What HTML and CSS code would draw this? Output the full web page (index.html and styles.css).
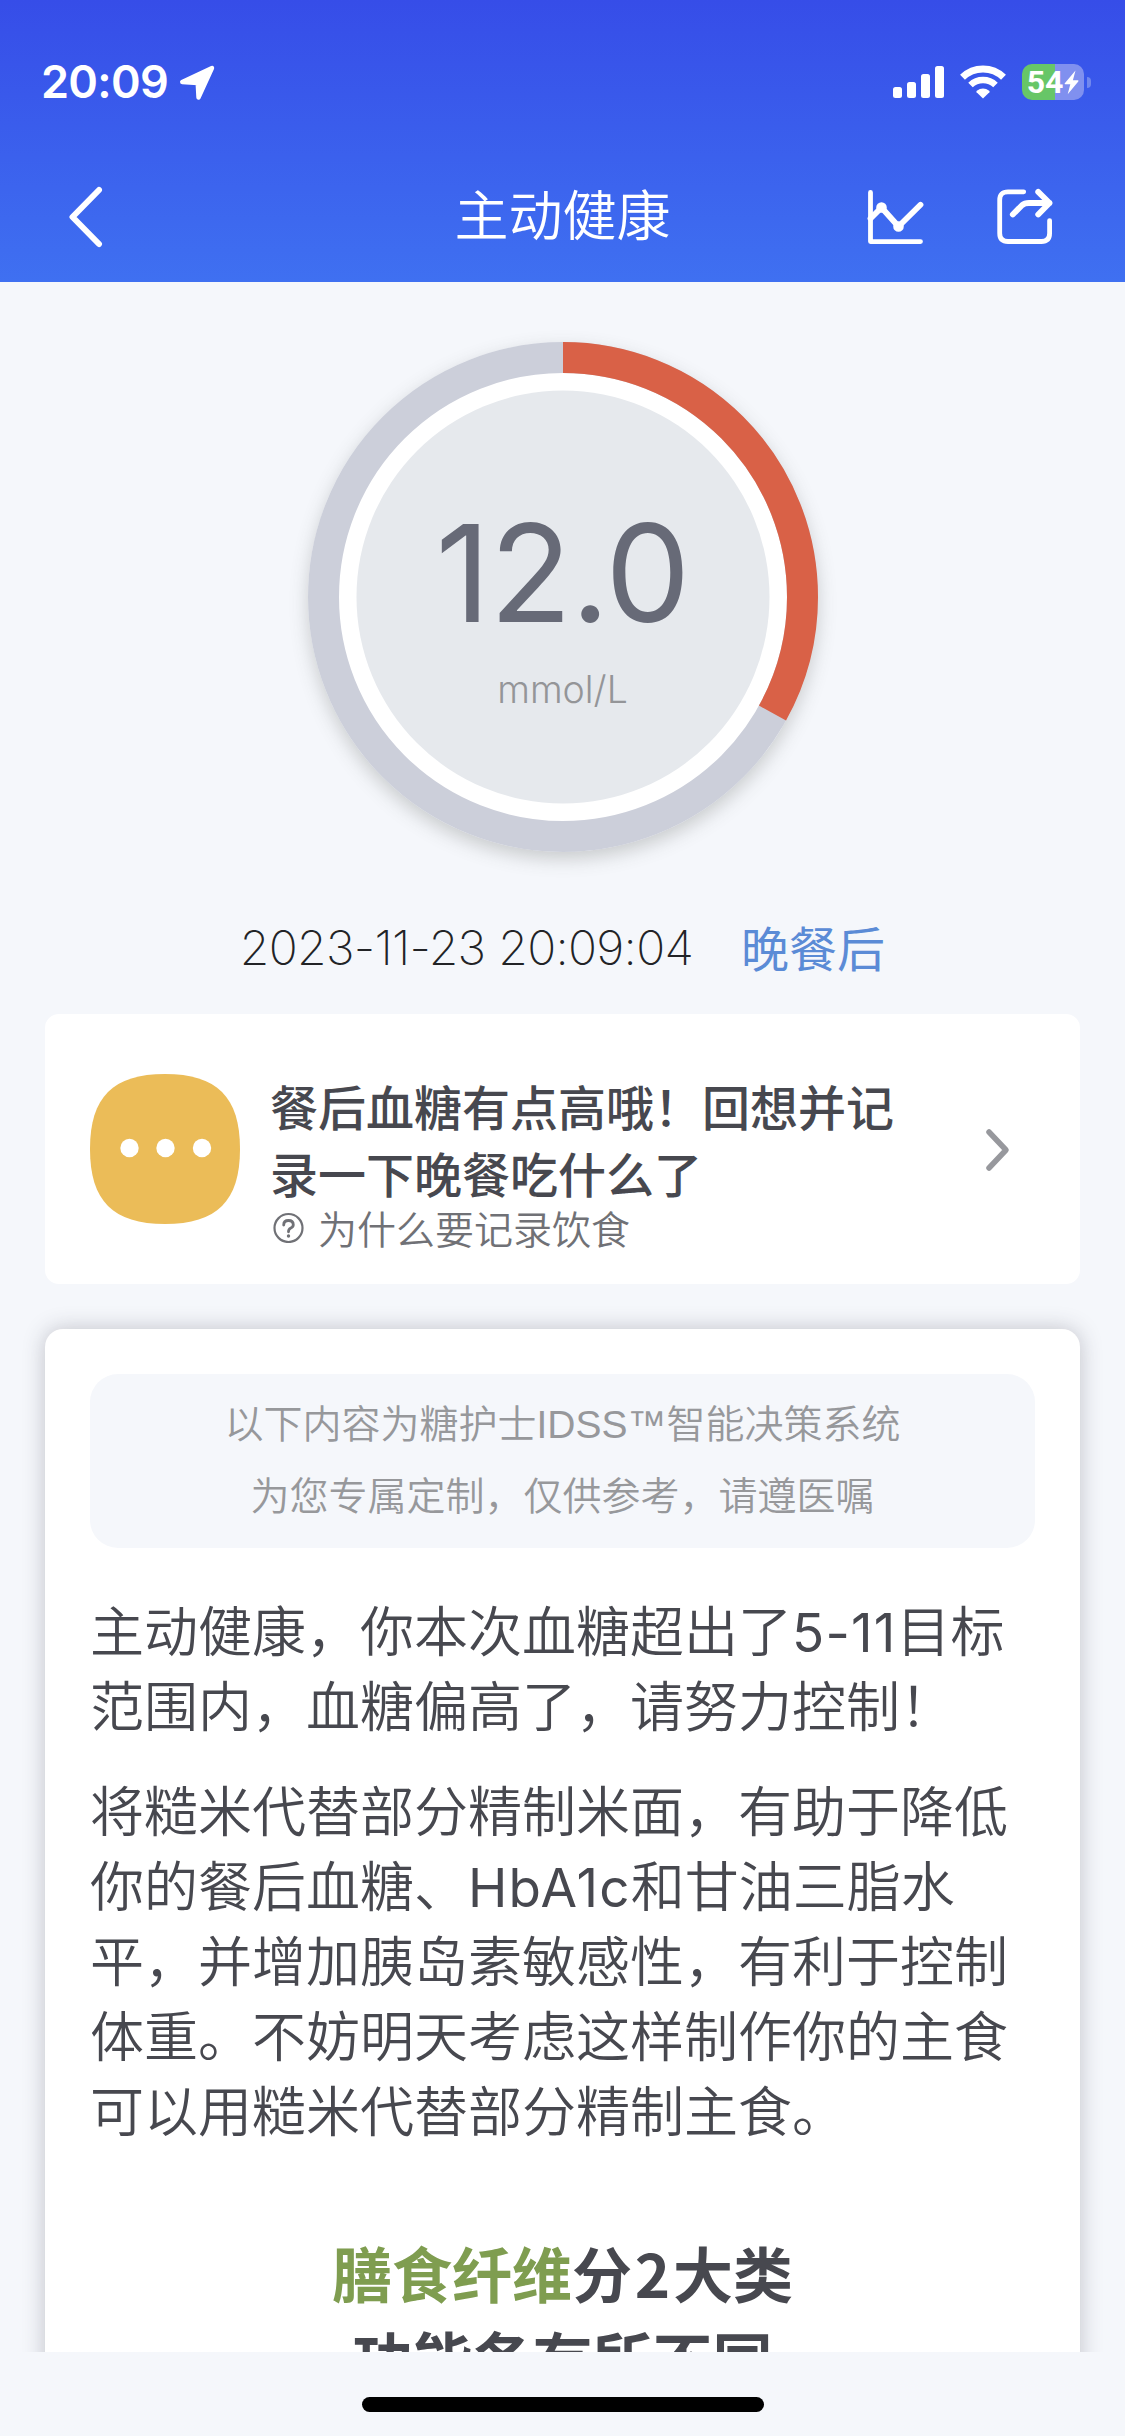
FILE: index.html
```html
<!DOCTYPE html>
<html lang="zh-CN">
<head>
<meta charset="utf-8">
<title>主动健康</title>
<link rel="stylesheet" href="styles.css">
</head>
<body>
<div class="screen">
  <header class="header">
    <div class="status">
      <span class="status-time">20:09</span>
      <svg class="status-location" width="37" height="36" viewBox="0 0 37 36"><path d="M4.200 17 34 3 20.500 32.500 19.700 18Z" fill="#fff" stroke="#fff" stroke-width="4.400" stroke-linejoin="round"/></svg>
      <div class="status-right">
        <svg width="52" height="34" viewBox="0 0 52 34" fill="#fff"><rect x="0" y="22" width="9" height="11" rx="2.500"/><rect x="14" y="17" width="9" height="16" rx="2.500"/><rect x="28" y="9" width="9" height="24" rx="2.500"/><rect x="42" y="1" width="9" height="32" rx="2.500"/></svg>
        <svg class="wifi" width="46" height="34" viewBox="0 0 46 34" fill="none" stroke="#fff"><path d="M2.500 12.200a29.500 29.500 0 0 1 41 0" stroke-width="7"/><path d="M10.500 20a18 18 0 0 1 25 0" stroke-width="6.500"/><path d="M23 33.500 16.600 27.200q-.6-.8.2-1.400 6.200-4.400 12.400 0 .8.6.2 1.400Z" fill="#fff" stroke="none"/></svg>
        <div class="battery"><span class="battery-level">54</span><svg width="15" height="25" viewBox="0 0 15 25"><path d="M11.500.5.8 13.200q-.6 1 .5 1.100h5L3.700 24.300 14.300 11.400q.6-1-.5-1.100H8.900Z" fill="#fff"/></svg></div>
        <span class="battery-cap"></span>
      </div>
    </div>
    <nav class="nav">
      <svg class="nav-back" width="36" height="66" viewBox="0 0 36 66"><path d="M32 6 5.500 33 32 60" fill="none" stroke="#fff" stroke-width="6" stroke-linecap="round" stroke-linejoin="round"/></svg>
      <h1 class="nav-title">主动健康</h1>
      <div class="nav-actions">
        <svg width="58" height="56" viewBox="0 0 58 56" fill="none" stroke="#fff" stroke-linecap="round" stroke-linejoin="round"><path d="M4.500 3.500V52.600H54.500" stroke-width="4.800"/><path d="M4.500 29.500 15.500 18.500 32.500 37.500 54.500 15.800" stroke-width="5.800"/><circle cx="15.500" cy="18.500" r="2.800" stroke-width="5"/><circle cx="32.500" cy="37.500" r="2.800" stroke-width="5"/></svg>
        <svg width="60" height="58" viewBox="0 0 60 58" fill="none" stroke="#fff" stroke-linecap="round" stroke-linejoin="round"><path d="M28.700 3.800H13Q4.700 3.800 4.700 12V45.300Q4.700 53.500 13 53.500H46.400Q54.600 53.500 54.600 45.300V32.600" stroke-width="4.800"/><path d="M43.200 3.900 54.500 15 43.200 26.500M54.500 15H34Q29.500 15 27 17.200L17.800 26.500" stroke-width="5.800"/></svg>
      </div>
    </nav>
  </header>

  <main class="content">
    <section class="gauge">
      <svg class="gauge-arc" width="510" height="510" viewBox="0 0 510 510"><circle cx="255" cy="255" r="239.500" fill="#fff" stroke="#cccfda" stroke-width="31"/><circle cx="255" cy="255" r="239.500" fill="none" stroke="#d96147" stroke-width="31" pathLength="360" stroke-dasharray="119 241" transform="rotate(-90 255 255)"/><circle cx="255" cy="255" r="206.500" fill="#e6e9ed"/></svg>
      <div class="gauge-label">
        <span class="gauge-value">12.0</span>
        <span class="gauge-unit">mmol/L</span>
      </div>
    </section>

    <div class="reading-meta"><time class="reading-time">2023-11-23 20:09:04</time><span class="reading-period">晚餐后</span></div>

    <section class="tip">
      <svg class="tip-icon" width="150" height="150" viewBox="0 0 150 150"><path d="M75 0C127 0 150 23 150 75S127 150 75 150 0 127 0 75 23 0 75 0Z" fill="#ebbc58"/><g fill="#fff"><circle cx="39.500" cy="74" r="9.200"/><circle cx="75.500" cy="74" r="9.200"/><circle cx="112" cy="74" r="9.200"/></g></svg>
      <div class="tip-body">
        <h2 class="tip-title">餐后血糖有点高哦！回想并记<br>录一下晚餐吃什么了</h2>
        <p class="tip-sub"><svg width="32" height="32" viewBox="0 0 32 32" fill="none" stroke="#707176"><circle cx="16.500" cy="17" r="14" stroke-width="2.200"/><path d="M11.700 14Q11.700 9.500 16.500 9.500T21.300 13.800Q21.300 16 18.500 17.300 16.500 18.300 16.500 20.800" stroke-width="2.800" stroke-linecap="round"/><circle cx="16.500" cy="25" r="1.700" fill="#707176" stroke="none"/></svg>为什么要记录饮食</p>
      </div>
      <svg class="tip-chevron" width="30" height="46" viewBox="0 0 30 46"><path d="M6 5 23 23 6 41" fill="none" stroke="#97989d" stroke-width="5.500" stroke-linecap="round" stroke-linejoin="round"/></svg>
    </section>

    <article class="advice">
      <div class="notice">以下内容为糖护士<span class="notice-latin">IDSS™</span>智能决策系统<br>为您专属定制，仅供参考，请遵医嘱</div>
      <p class="paragraph">主动健康，你本次血糖超出了<span class="latin">5-11</span>目标<br>范围内，血糖偏高了，请努力控制！</p>
      <p class="paragraph">将糙米代替部分精制米面，有助于降低<br>你的餐后血糖、<span class="latin">HbA1c</span>和甘油三脂水<br>平，并增加胰岛素敏感性，有利于控制<br>体重。不妨明天考虑这样制作你的主食<br>可以用糙米代替部分精制主食。</p>
      <h3 class="poster"><span class="poster-accent">膳食纤维</span>分<span class="poster-digit">2</span>大类<br>功能各有所不同</h3>
    </article>
  </main>

  <footer class="home"><span class="home-bar"></span></footer>
</div>
</body>
</html>
```
FILE: styles.css
```css
* { box-sizing: border-box; margin: 0; padding: 0; }
body { width: 1125px; height: 2436px; overflow: hidden; background: #f5f7fb; font-family: "Noto Sans CJK SC", sans-serif; color: #47484f; }
svg { display: block; flex: none; }
span, time { white-space: nowrap; }
.screen { display: flex; flex-direction: column; height: 2436px; }

.header { height: 282px; flex: none; background: linear-gradient(#364de8, #3f70f1); color: #fff; }
.status { display: flex; align-items: center; height: 164px; padding: 0 34px 0 41px; }
.status-time { width: 137px; font: 600 45px/54px Inter, sans-serif; letter-spacing: -0.700px; }
.status-location { margin-top: 2px; }
.status-right { display: flex; align-items: center; margin-left: auto; }
.wifi { margin: 0 16px 0 15px; }
.battery { display: flex; align-items: center; justify-content: center; gap: 1px; width: 62px; height: 36px; border-radius: 10px; background: linear-gradient(90deg, #67c667 33px, #8090ef 33px); }
.battery-level { font: 700 32px/36px Roboto, sans-serif; }
.battery-cap { width: 4px; height: 11px; margin-left: 3px; border-radius: 0 5px 5px 0; background: #7187ee; }
.nav { display: grid; grid-template-columns: 1fr auto 1fr; align-items: center; height: 106px; padding: 0 70px 0 70px; }
.nav-back { margin-left: -3px; }
.nav-title { font-size: 54px; font-weight: 350; line-height: 76px; margin-top: -8px; }
.nav-actions { display: flex; gap: 71px; justify-content: flex-end; align-items: center; }

.content { flex: 1; min-height: 0; overflow: hidden; display: flex; flex-direction: column; padding: 60px 45px 0; }
.gauge { display: grid; place-items: center; flex: none; width: 510px; height: 510px; margin: 0 auto; border-radius: 50%; box-shadow: 0 7px 18px rgba(70, 75, 70, .25); }
.gauge-arc, .gauge-label { grid-area: 1 / 1; }
.gauge-label { display: flex; flex-direction: column; align-items: center; gap: 12px; padding-top: 13px; }
.gauge-value { font: 400 135px/160px Inter, sans-serif; color: #676a77; letter-spacing: -1px; }
.gauge-unit { font: 300 37.500px/50px Inter, sans-serif; color: #949598; }

.reading-meta { display: flex; align-items: center; justify-content: center; flex: none; gap: 48px; height: 72px; margin: 59px 0 31px; }
.reading-time { margin-top: 1px; font: 200 48px/72px Inter, sans-serif; color: #222326; letter-spacing: -0.700px; }
.reading-period { margin-top: -2px; font-size: 48px; line-height: 72px; color: #5b8bd6; }

.tip { display: flex; flex: none; height: 270px; padding: 60px 67px 0 45px; border-radius: 14px; background: #fff; }
.tip-body { margin: -2px 0 0 30px; }
.tip-title { font-size: 48px; line-height: 67px; font-weight: 500; }
.tip-sub { display: flex; align-items: center; gap: 14px; padding-left: 2px; font-size: 39px; line-height: 42px; font-weight: 350; color: #707176; }
.tip-chevron { margin: 53px 0 0 auto; }

.advice { flex: none; height: 1200px; margin-top: 45px; padding: 45px; border-radius: 18px; background: #fff; box-shadow: 0 0 22px rgba(50, 50, 65, .27); }
.notice { height: 174px; padding: 11px 0; border-radius: 28px; background: #f5f7fb; color: #97989b; font-size: 39px; line-height: 72px; font-weight: 350; text-align: center; }
.notice-latin { font-family: "Liberation Sans", sans-serif; line-height: 0; }
.paragraph { margin-top: 30px; font-size: 54px; line-height: 75px; font-weight: 350; white-space: nowrap; }
.notice + .paragraph { margin-top: 43px; }
.latin { font-family: Inter, sans-serif; font-weight: 400; font-size: 53px; line-height: 0; letter-spacing: 1.200px; }
.poster { margin-top: 83px; font-size: 60px; line-height: 85px; font-weight: 700; text-align: center; }
.poster-accent { color: #7f9d50; }
.poster-digit { display: inline-block; width: 41px; }

.home { display: flex; justify-content: center; flex: none; height: 84px; padding-top: 45px; }
.home-bar { width: 402px; height: 15px; border-radius: 8px; background: #000; }
```
